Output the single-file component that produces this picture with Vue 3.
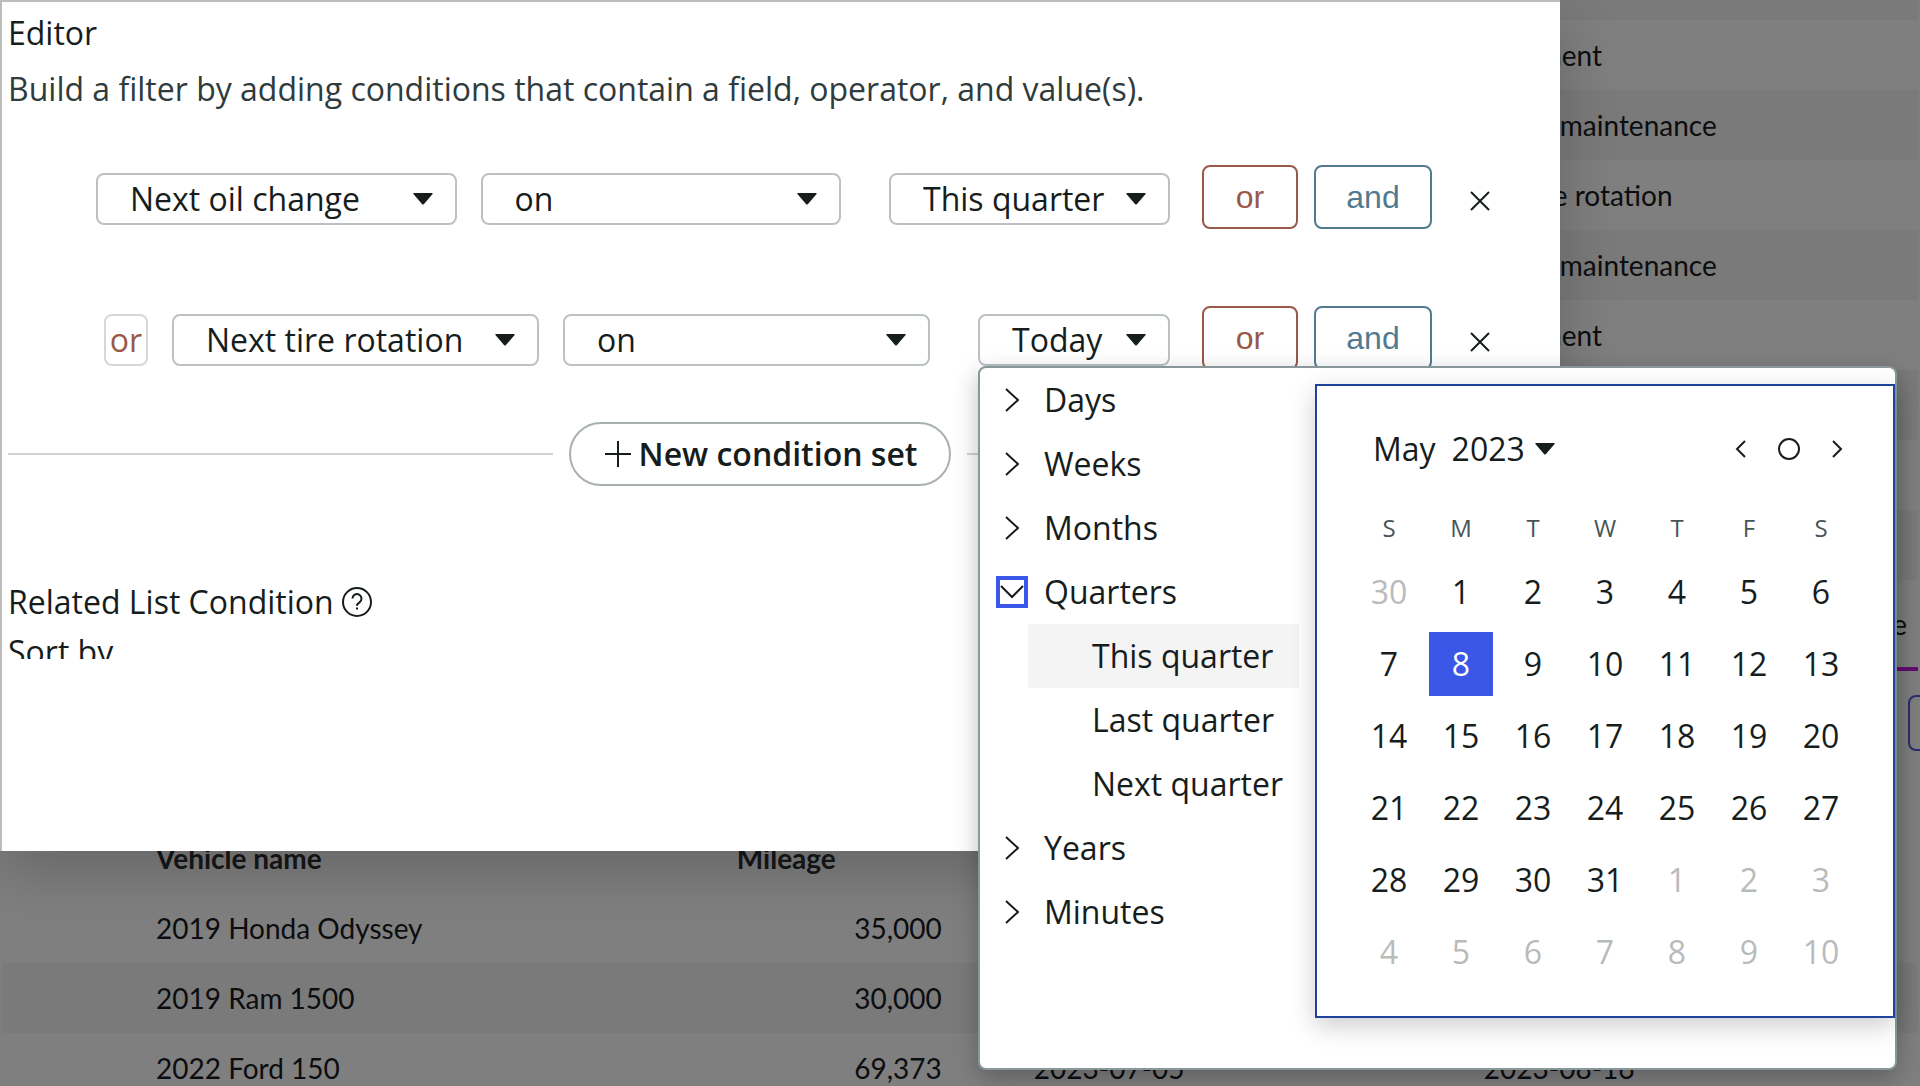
<script setup>
import { ref } from 'vue'

const services = [
  { text: '', cut: 'none' },
  { text: 'ment', cut: 'far' },
  { text: 'maintenance', cut: 'none' },
  { text: 'e rotation', cut: 'near' },
  { text: 'maintenance', cut: 'none' },
  { text: 'ment', cut: 'far' },
  { text: '', cut: 'none' },
  { text: '', cut: 'none' },
  { text: '', cut: 'none' }
]

const vehicles = [
  { name: '2019 Honda Odyssey', mileage: '35,000', oil: '', tires: '' },
  { name: '2019 Ram 1500', mileage: '30,000', oil: '', tires: '' },
  { name: '2022 Ford 150', mileage: '69,373', oil: '2023-07-05', tires: '2023-08-16' }
]

const periods = [
  { label: 'Days' },
  { label: 'Weeks' },
  { label: 'Months' },
  { label: 'Quarters', children: ['This quarter', 'Last quarter', 'Next quarter'] },
  { label: 'Years' },
  { label: 'Minutes' }
]
const openPeriod = ref('Quarters')
const activeChild = ref('This quarter')

const weekdays = ['S', 'M', 'T', 'W', 'T', 'F', 'S']
const selectedDay = ref(8)
const weeks = Array.from({ length: 6 }, (_, w) =>
  Array.from({ length: 7 }, (_, d) => {
    const n = w * 7 + d
    if (n < 1) return { n: 30, muted: true }
    if (n > 31) return { n: n - 31, muted: true }
    return { n, muted: false }
  })
)
</script>

<template>
  <div class="page">
    <div class="backdrop-content">
      <table class="list services">
        <tbody>
          <tr v-for="(s, i) in services" :key="i">
            <td></td>
            <td :class="s.cut">{{ s.text }}</td>
          </tr>
        </tbody>
      </table>
      <div class="tabs"><a href="#" class="tab">e</a></div>
      <div class="actions"><button class="ghost" aria-label="Action"></button></div>
      <table class="list vehicles">
        <thead>
          <tr>
            <th class="c-name">Vehicle name</th>
            <th class="c-mileage">Mileage</th>
            <th class="c-gap"></th>
            <th class="c-oil"></th>
            <th></th>
          </tr>
        </thead>
        <tbody>
          <tr v-for="v in vehicles" :key="v.name">
            <td class="c-name">{{ v.name }}</td>
            <td class="c-mileage num">{{ v.mileage }}</td>
            <td></td>
            <td>{{ v.oil }}</td>
            <td>{{ v.tires }}</td>
          </tr>
        </tbody>
      </table>
    </div>
    <div class="shade"></div>

    <main class="editor">
      <h1 class="title">Editor</h1>
      <p class="lead">Build a filter by adding conditions that contain a field, operator, and value(s).</p>

      <div class="condition first">
        <div class="pick grow">
          <select aria-label="Field"><option>Next oil change</option></select>
          <svg class="caret" viewBox="0 0 20 12"><path d="M1 0h18q1 0 .6 1L11 11q-1 1-2 0L.4 1Q0 0 1 0z" /></svg>
        </div>
        <div class="pick grow">
          <select aria-label="Operator"><option>on</option></select>
          <svg class="caret" viewBox="0 0 20 12"><path d="M1 0h18q1 0 .6 1L11 11q-1 1-2 0L.4 1Q0 0 1 0z" /></svg>
        </div>
        <div class="pick value wide">
          <select aria-label="Value"><option>This quarter</option></select>
          <svg class="caret" viewBox="0 0 20 12"><path d="M1 0h18q1 0 .6 1L11 11q-1 1-2 0L.4 1Q0 0 1 0z" /></svg>
        </div>
        <div class="joins">
          <button class="join or">or</button>
          <button class="join and">and</button>
        </div>
        <button class="remove" aria-label="Remove condition">
          <svg viewBox="0 0 20 20"><path d="M1 1l18 18M19 1L1 19" /></svg>
        </button>
      </div>

      <div class="condition second">
        <span class="or-tag">or</span>
        <div class="pick grow">
          <select aria-label="Field"><option>Next tire rotation</option></select>
          <svg class="caret" viewBox="0 0 20 12"><path d="M1 0h18q1 0 .6 1L11 11q-1 1-2 0L.4 1Q0 0 1 0z" /></svg>
        </div>
        <div class="pick grow">
          <select aria-label="Operator"><option>on</option></select>
          <svg class="caret" viewBox="0 0 20 12"><path d="M1 0h18q1 0 .6 1L11 11q-1 1-2 0L.4 1Q0 0 1 0z" /></svg>
        </div>
        <div class="pick value narrow">
          <select aria-label="Value"><option>Today</option></select>
          <svg class="caret" viewBox="0 0 20 12"><path d="M1 0h18q1 0 .6 1L11 11q-1 1-2 0L.4 1Q0 0 1 0z" /></svg>

          <div class="popup">
            <ul class="tree">
              <li v-for="p in periods" :key="p.label">
                <div class="branch">
                  <button
                    class="toggle"
                    :class="{ focused: openPeriod === p.label }"
                    :aria-label="p.label"
                    @click="openPeriod = p.label"
                  >
                    <svg v-if="openPeriod === p.label" class="down" viewBox="0 0 24 14"><path d="M1 1l11 11L23 1" /></svg>
                    <svg v-else class="right" viewBox="0 0 14 24"><path d="M1 1l12 11L1 23" /></svg>
                  </button>
                  <span>{{ p.label }}</span>
                </div>
                <ul v-if="p.children && openPeriod === p.label" class="leaves">
                  <li v-for="c in p.children" :key="c">
                    <button class="leaf" :class="{ active: c === activeChild }" @click="activeChild = c">{{ c }}</button>
                  </li>
                </ul>
              </li>
            </ul>

            <section class="calendar" aria-label="Calendar">
              <header class="cal-head">
                <span class="month">May</span>
                <button class="year">
                  2023
                  <svg viewBox="0 0 20 12"><path d="M1 0h18q1 0 .6 1L11 11q-1 1-2 0L.4 1Q0 0 1 0z" /></svg>
                </button>
                <nav class="cal-nav">
                  <button aria-label="Previous month"><svg class="arrow" viewBox="0 0 12 18"><path d="M10 1L2 9l8 8" /></svg></button>
                  <button aria-label="Current month"><svg class="dot" viewBox="0 0 24 24"><circle cx="12" cy="12" r="10" /></svg></button>
                  <button aria-label="Next month"><svg class="arrow" viewBox="0 0 12 18"><path d="M2 1l8 8-8 8" /></svg></button>
                </nav>
              </header>
              <table class="days">
                <thead>
                  <tr><th v-for="(d, i) in weekdays" :key="i">{{ d }}</th></tr>
                </thead>
                <tbody>
                  <tr v-for="(week, w) in weeks" :key="w">
                    <td v-for="(day, d) in week" :key="d">
                      <button
                        class="day"
                        :class="{ muted: day.muted, selected: !day.muted && day.n === selectedDay }"
                        @click="selectedDay = day.n"
                      >{{ day.n }}</button>
                    </td>
                  </tr>
                </tbody>
              </table>
            </section>
          </div>
        </div>
        <div class="joins">
          <button class="join or">or</button>
          <button class="join and">and</button>
        </div>
        <button class="remove" aria-label="Remove condition">
          <svg viewBox="0 0 20 20"><path d="M1 1l18 18M19 1L1 19" /></svg>
        </button>
      </div>

      <div class="divider">
        <button class="new-set">
          <svg viewBox="0 0 26 26"><path d="M13 0v26M0 13h26" /></svg>
          New condition set
        </button>
      </div>

      <section class="related">
        <h2 class="related-title">
          Related List Condition
          <svg viewBox="0 0 30 30">
            <circle cx="15" cy="15" r="14" />
            <path d="M10.500 11.500a4.500 4.500 0 1 1 7 3.800c-1.700 1.100-2.500 1.700-2.500 3.400" />
            <path d="M15 20.600v2" />
          </svg>
        </h2>
        <h2 class="sort">Sort by</h2>
      </section>
    </main>
  </div>
</template>

<style>
body {
  margin: 0;
  overflow: hidden;
}
</style>

<style scoped>
.page {
  position: relative;
  height: 100vh;
  overflow: hidden;
  background: #fff;
  color: #161d1c;
  font-family: "Open Sans", "Noto Sans", sans-serif;
  font-size: 32px;
  line-height: 44px;
}
button,
select {
  font: inherit;
  color: inherit;
  background: none;
  border: 0;
  padding: 0;
  margin: 0;
}
svg {
  display: block;
  fill: none;
  stroke: #161d1c;
  stroke-width: 2;
}
ul {
  list-style: none;
  margin: 0;
  padding: 0;
}

/* record lists behind the shade */
.backdrop-content {
  padding: 0 2px;
  color: #181a22;
  font-family: Lato, sans-serif;
  font-size: 28px;
  line-height: 34px;
}
.list {
  width: 100%;
  border-collapse: collapse;
  table-layout: fixed;
}
.list tr {
  height: 70px;
}
.list td,
.list th {
  padding: 0;
  text-align: left;
  white-space: nowrap;
}
.list th {
  font-weight: 700;
  color: #2c2e33;
}
.services {
  margin-top: -50px;
}
.services td:first-child {
  width: 80%;
}
.services tr:nth-child(odd),
.vehicles tbody tr:nth-child(even) {
  background: #f4f4f4;
}
.services .none {
  padding-left: 25px;
}
.services .near {
  padding-left: 18px;
}
.services .far {
  padding-left: 4px;
}
.tabs {
  display: flex;
  justify-content: flex-end;
  margin-top: 27px;
  border-bottom: 4px solid #c81ae6;
}
.tab {
  padding: 0 11px 26px 0;
  color: inherit;
  text-decoration: none;
}
.actions {
  display: flex;
  justify-content: flex-end;
  padding: 24px 0 72px;
}
.ghost {
  width: 56px;
  height: 56px;
  margin-right: -46px;
  border: 2px solid #5b5be0;
  border-radius: 8px;
}
.vehicles .c-name {
  width: 30%;
  padding-left: 154px;
}
.vehicles .c-mileage {
  width: 205px;
  padding-left: 6px;
}
.vehicles .c-gap {
  width: 92px;
}
.vehicles .c-oil {
  width: 450px;
}
.list .num {
  text-align: right;
}
.shade {
  position: absolute;
  inset: 0;
  background: rgba(0, 0, 0, 0.5);
}

/* filter editor */
.editor {
  position: absolute;
  top: 0;
  left: 0;
  box-sizing: border-box;
  width: 81.25%;
  padding: 9px 0 192px 6px;
  border-top: 2px solid #bcbcbc;
  border-left: 2px solid #bcbcbc;
  background: #fff;
  box-shadow: 0 20px 56px rgba(0, 0, 0, 0.2);
}
.title,
.lead,
.related-title,
.sort {
  margin: 0;
  font-size: 32px;
  font-weight: 400;
}
.lead {
  margin-top: 12px;
  color: #2f3b3c;
}
.condition {
  display: flex;
  align-items: center;
  gap: 24px;
  height: 68px;
  padding-right: 60px;
}
.first {
  margin-top: 54px;
  padding-left: 88px;
}
.second {
  margin-top: 73px;
  padding-left: 96px;
}
.pick {
  position: relative;
}
.grow {
  flex: 1;
}
.value {
  margin-left: 24px;
}
.wide {
  width: 281px;
}
.narrow {
  width: 192px;
}
.pick select {
  display: block;
  box-sizing: border-box;
  width: 100%;
  height: 52px;
  padding: 0 48px 0 32px;
  appearance: none;
  border: 2px solid #bcc2c4;
  border-radius: 8px;
  background: #fff;
}
.caret {
  position: absolute;
  top: 20px;
  right: 24px;
  width: 20px;
  height: 12px;
  pointer-events: none;
}
.caret,
.year svg {
  fill: #161d1c;
  stroke: none;
}
.or-tag {
  box-sizing: border-box;
  width: 44px;
  height: 52px;
  border: 2px solid #d3d8d8;
  border-radius: 8px;
  color: #9a5848;
  line-height: 48px;
  text-align: center;
}
.joins {
  display: flex;
  gap: 16px;
  margin: 0 4px 4px 8px;
}
.join {
  height: 64px;
  border: 2px solid currentColor;
  border-radius: 8px;
  font-family: "Liberation Sans", Arial, sans-serif;
}
.join.or {
  width: 96px;
  color: #9a5848;
}
.join.and {
  width: 118px;
  color: #517a91;
}
.remove {
  width: 40px;
  height: 40px;
  padding: 12px 10px 8px;
}
.remove svg {
  width: 20px;
  height: 20px;
}
.divider {
  display: flex;
  align-items: center;
  gap: 16px;
  margin-top: 48px;
}
.divider::before,
.divider::after {
  content: "";
  height: 2px;
  background: #d0d4d4;
}
.divider::before {
  flex: 545;
}
.divider::after {
  flex: 593;
}
.new-set {
  display: flex;
  align-items: center;
  gap: 8px;
  height: 64px;
  padding: 0 32px 0 34px;
  border: 2px solid #a9b0b2;
  border-radius: 32px;
  font-weight: 600;
}
.new-set svg {
  width: 26px;
  height: 26px;
}
.related {
  height: 79px;
  margin-top: 94px;
  overflow: hidden;
}
.related-title {
  display: flex;
  align-items: center;
  gap: 8px;
}
.related-title svg {
  width: 30px;
  height: 30px;
}
.sort {
  margin-top: 6px;
}

/* value popup */
.popup {
  position: absolute;
  top: 100%;
  left: 0;
  z-index: 2;
  display: flex;
  align-items: flex-start;
  border: 2px solid #87979a;
  border-radius: 8px;
  background: #fff;
  box-shadow: 0 8px 24px rgba(0, 0, 0, 0.25);
}
.tree {
  width: 335px;
}
.branch {
  display: flex;
  align-items: center;
  gap: 16px;
  height: 64px;
  padding-left: 16px;
}
.toggle {
  display: flex;
  align-items: center;
  justify-content: center;
  box-sizing: border-box;
  width: 32px;
  height: 32px;
}
.toggle.focused {
  border: 4px solid #3b57e8;
}
.toggle .right {
  width: 14px;
  height: 24px;
}
.toggle .down {
  width: 24px;
  height: 14px;
}
.leaves {
  padding: 0 16px 0 48px;
}
.leaf {
  display: block;
  width: 100%;
  height: 64px;
  padding-left: 64px;
  text-align: left;
  white-space: nowrap;
}
.leaf.active {
  background: #f4f4f4;
}
.calendar {
  box-sizing: border-box;
  width: 580px;
  margin: 16px 0 50px;
  padding: 32px 32px 24px;
  border: 2px solid #1f429b;
  background: #fff;
  box-shadow: 0 8px 24px rgba(0, 0, 0, 0.2);
}
.cal-head {
  display: flex;
  align-items: center;
  height: 62px;
  margin-bottom: 16px;
  padding-left: 24px;
}
.year {
  display: flex;
  align-items: center;
  gap: 10px;
  margin-left: 16px;
}
.year svg {
  width: 20px;
  height: 12px;
}
.cal-nav {
  display: flex;
  margin-left: auto;
}
.cal-nav button {
  display: flex;
  align-items: center;
  justify-content: center;
  width: 48px;
  height: 48px;
}
.arrow {
  width: 12px;
  height: 18px;
}
.dot {
  width: 24px;
  height: 24px;
}
.days {
  border-collapse: separate;
  border-spacing: 8px;
}
.days th,
.days td {
  width: 64px;
  padding: 0;
}
.days th {
  height: 48px;
  color: #465557;
  font-size: 24px;
  font-weight: 400;
  line-height: 34px;
}
.day {
  display: block;
  width: 64px;
  height: 64px;
}
.day.muted {
  color: #b9bbbb;
}
.day.selected {
  background: #3b57e8;
  color: #fff;
}
</style>
